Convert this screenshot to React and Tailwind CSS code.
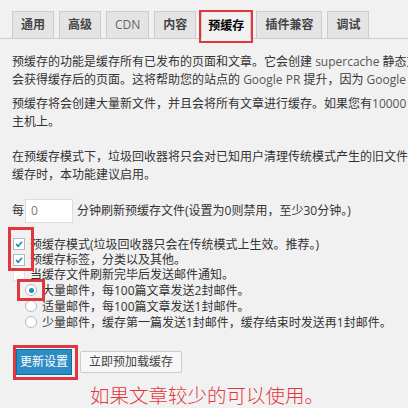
const tabs = ['通用', '高级', 'CDN', '内容', '预缓存', '插件兼容', '调试']

function Tab({ label, active }) {
  if (active) {
    return (
      <div className="relative -mb-px flex h-[28px] items-center border border-b-0 border-[#ccc] bg-[#f1f1f1] px-[6px] font-bold text-[#000]">
        {label}
        <span className="pointer-events-none absolute -left-[3px] -right-[3px] -top-[2px] -bottom-[4px] border-2 border-[#e2363f]" />
      </div>
    )
  }
  return (
    <div className="flex h-[27px] items-center border border-b-0 border-[#ccc] bg-[#e4e4e4] px-[8px] font-bold text-[#444]">
      {label === 'CDN' ? <span className="font-normal text-[#666]">{label}</span> : label}
    </div>
  )
}

function Checkbox({ checked, faint }) {
  return (
    <span
      className={
        'mr-[5px] flex h-[12px] w-[12px] shrink-0 items-center justify-center border bg-white ' +
        (faint ? 'border-[#e4e4e4]' : 'border-[#b4b9be]')
      }
    >
      {checked && (
        <svg viewBox="0 0 12 12" className="h-[10px] w-[10px]">
          <path d="M2.5 6.2 L5 8.6 L9.6 3.2" fill="none" stroke="#1e8cbe" strokeWidth="2" />
        </svg>
      )}
    </span>
  )
}

function Radio({ checked }) {
  return (
    <span className="mr-[5px] flex h-[12px] w-[12px] shrink-0 items-center justify-center rounded-full border border-[#b4b9be] bg-white">
      {checked && <span className="h-[5px] w-[5px] rounded-full bg-[#1e8cbe]" />}
    </span>
  )
}

export default function App() {
  return (
    <div
      className="relative h-[408px] w-[408px] overflow-hidden whitespace-nowrap bg-[#f1f1f1] text-[12px] leading-[18px] text-[#333]"
      style={{ fontFamily: '"Open Sans", "Noto Sans CJK SC", sans-serif' }}
    >
      <div className="mt-[11px] flex items-end gap-[5px] border-b border-[#ccc] pl-[12px]">
        {tabs.map((t) => (
          <Tab key={t} label={t} active={t === '预缓存'} />
        ))}
      </div>

      <div className="pl-[12px]">
        <p className="mt-[14px]">
          预缓存的功能是缓存所有已发布的页面和文章。它会创建 <span className="text-[#555]">supercache</span> 静态文件
          <br />
          会获得缓存后的页面。这将帮助您的站点的 <span className="text-[#555]">Google PR</span> 提升，因为 <span className="text-[#555]">Google</span>
        </p>
        <p className="mt-[6px]">
          预缓存将会创建大量新文件，并且会将所有文章进行缓存。如果您有<span className="text-[#555]">10000</span>
          <br />
          主机上。
        </p>
        <p className="mt-[17px]">
          在预缓存模式下，垃圾回收器将只会对已知用户清理传统模式产生的旧文件
          <br />
          缓存时，本功能建议启用。
        </p>

        <div className="mt-[15px] flex h-[24px] items-center">
          <span>每</span>
          <div className="ml-px flex h-[24px] w-[48px] items-center border border-[#ddd] bg-white pl-[5px] text-[#777]">
            0
          </div>
          <span className="ml-[4px]">分钟刷新预缓存文件(设置为0则禁用，至少30分钟。)</span>
        </div>

        <div className="relative mt-[13px] flex flex-col leading-[15px]">
          <span className="pointer-events-none absolute -left-[4px] -top-[9px] h-[44px] w-[26px] border-[3px] border-[#e2363f]" />
          <label className="flex h-[16px] items-center pl-px">
            <Checkbox checked />
            预缓存模式(垃圾回收器只会在传统模式上生效。推荐。)
          </label>
          <label className="flex h-[15px] items-center pl-px">
            <Checkbox checked />
            预缓存标签，分类以及其他。
          </label>
          <label className="flex h-[15px] items-center pl-px">
            <Checkbox faint />
            当缓存文件刷新完毕后发送邮件通知。
          </label>
          <div className="flex flex-col pl-[13px]">
            <label className="relative flex h-[16px] items-center">
              <span className="pointer-events-none absolute -left-[8px] -top-[3px] h-[22px] w-[28px] border-[3px] border-[#e2363f]" />
              <Radio checked />
              大量邮件，每100篇文章发送2封邮件。
            </label>
            <label className="flex h-[16px] items-center">
              <Radio />
              适量邮件，每100篇文章发送1封邮件。
            </label>
            <label className="flex h-[16px] items-center">
              <Radio />
              少量邮件，缓存第一篇发送1封邮件，缓存结束时发送再1封邮件。
            </label>
          </div>
        </div>

        <div className="mt-[19px] flex items-center gap-[8px] pl-[4px]">
          <div className="relative">
            <button className="flex h-[26px] items-center border border-[#0074a2] bg-[#2e8cc4] px-[3px] text-[12px] text-white">
              更新设置
            </button>
            <span className="pointer-events-none absolute -left-[3px] -right-[6px] -top-[4px] -bottom-[5px] border-[3px] border-[#e2363f]" />
          </div>
          <button className="flex h-[22px] items-center rounded-[2px] border border-[#ccc] bg-[#f7f7f7] px-[8px] text-[12px] text-[#444]">
            立即预加载缓存
          </button>
        </div>

        <p
          className="mt-[8px] pl-[78px] text-[19.5px] font-light leading-[24px] text-[#e2363f]"
          style={{ fontFamily: '"Noto Sans CJK SC", sans-serif' }}
        >
          如果文章较少的可以使用。
        </p>
      </div>
    </div>
  )
}
